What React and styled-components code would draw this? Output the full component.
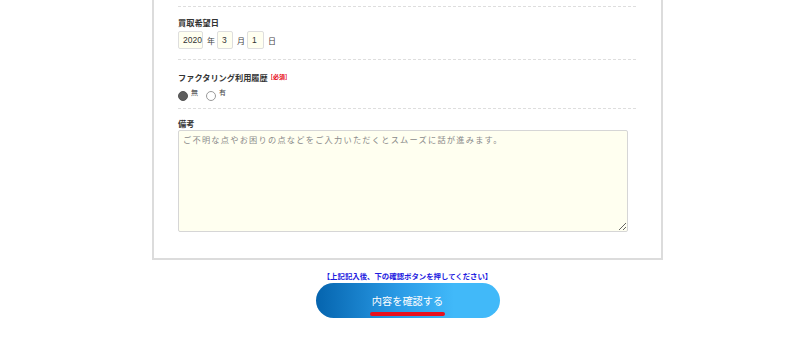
import React from "react";
import styled, { createGlobalStyle } from "styled-components";

const Global = createGlobalStyle`
  html, body {
    margin: 0;
    padding: 0;
    background: #fff;
    font-family: "Noto Sans CJK JP", "Noto Sans", sans-serif;
    color: #333;
  }
`;

const Page = styled.div`
  width: 511px;
  margin-left: 152px;
  display: flex;
  flex-direction: column;
  align-items: center;
`;

const Panel = styled.div`
  box-sizing: border-box;
  width: 100%;
  border: 2px solid #dcdcdc;
  border-top: none;
  padding: 6px 25px 26px 24px;
`;

const Row = styled.div`
  border-top: 1px dashed #dedede;
  padding: ${(p) => p.$pt ?? 9}px 0 ${(p) => p.$pb ?? 10}px;
`;

const Label = styled.div`
  font-size: 8.2px;
  line-height: 12px;
  font-weight: bold;
  color: #333;
  display: flex;
  align-items: center;
  gap: 3px;
`;

const Required = styled.span`
  font-size: 6px;
  color: #e60012;
  font-weight: bold;
`;

const DateRow = styled.div`
  display: flex;
  align-items: center;
  margin-top: 3px;
  height: 18px;
`;

const DateBox = styled.div`
  box-sizing: border-box;
  width: ${(p) => p.$w}px;
  height: 18px;
  background: #fffff0;
  border: 1px solid #dedede;
  border-radius: 2px;
  font-size: 8.5px;
  line-height: 16px;
  padding-left: 4px;
  color: #333;
  font-family: "Liberation Sans", Arial, sans-serif;
`;

const Unit = styled.span`
  font-size: 8px;
  color: #444;
  margin: 0 2px 0 4px;
`;

const RadioRow = styled.div`
  display: flex;
  align-items: center;
  margin-top: 4px;
  height: 14px;
`;

const Radio = styled.span`
  box-sizing: border-box;
  width: 10px;
  height: 10px;
  border-radius: 50%;
  margin-top: 3px;
  border: 1px solid ${(p) => (p.$on ? "#555" : "#9a9a9a")};
  background: ${(p) => (p.$on ? "#5e5e5e" : "#fff")};
`;

const RadioText = styled.span`
  font-size: 7px;
  line-height: 10px;
  align-self: flex-start;
  color: #444;
  margin: 0 8px 0 3px;
`;

const Memo = styled.textarea`
  display: block;
  box-sizing: border-box;
  width: 450px;
  height: 102px;
  margin-top: 1px;
  background: #fffff0;
  border: 1px solid #d6d6d6;
  border-radius: 2px;
  padding: 2px 4px;
  font-family: "Noto Sans CJK JP", sans-serif;
  font-size: 8.2px;
  letter-spacing: 1.25px;
  line-height: 12px;
  outline: none;
  &::placeholder {
    color: #8a8a8a;
  }
`;

const Notice = styled.div`
  margin-top: 10px;
  font-size: 7.4px;
  line-height: 12px;
  font-weight: bold;
  color: #1d1ae0;
`;

const ConfirmButton = styled.button`
  margin-top: 1px;
  width: 184px;
  height: 35px;
  border: none;
  border-radius: 18px;
  background: linear-gradient(to right, #0564ae 0%, #2a9be6 45%, #41b9f9 75%);
  color: #fff;
  font-family: "Noto Sans CJK JP", sans-serif;
  font-size: 10.2px;
  display: flex;
  justify-content: center;
  align-items: center;
  padding: 0;
  cursor: pointer;
`;

const ButtonLabel = styled.span`
  position: relative;
  line-height: 14px;
  margin-top: 1px;
  &::after {
    content: "";
    position: absolute;
    left: -2px;
    right: -2px;
    bottom: -8px;
    height: 4px;
    border-radius: 2px;
    background: #e8101e;
  }
`;

export default function App() {
  return (
    <>
      <Global />
      <Page>
        <Panel>
          <Row $pt={9} $pb={10}>
            <Label>買取希望日</Label>
            <DateRow>
              <DateBox $w={25}>2020</DateBox>
              <Unit>年</Unit>
              <DateBox $w={16}>3</DateBox>
              <Unit>月</Unit>
              <DateBox $w={17}>1</DateBox>
              <Unit>日</Unit>
            </DateRow>
          </Row>
          <Row $pt={11} $pb={7}>
            <Label>
              ファクタリング利用履歴<Required>[必須]</Required>
            </Label>
            <RadioRow>
              <Radio $on />
              <RadioText>無</RadioText>
              <Radio />
              <RadioText>有</RadioText>
            </RadioRow>
          </Row>
          <Row $pt={8} $pb={0}>
            <Label>備考</Label>
            <Memo placeholder="ご不明な点やお困りの点などをご入力いただくとスムーズに話が進みます。" />
          </Row>
        </Panel>
        <Notice>【上記記入後、下の確認ボタンを押してください】</Notice>
        <ConfirmButton>
          <ButtonLabel>内容を確認する</ButtonLabel>
        </ConfirmButton>
      </Page>
    </>
  );
}
